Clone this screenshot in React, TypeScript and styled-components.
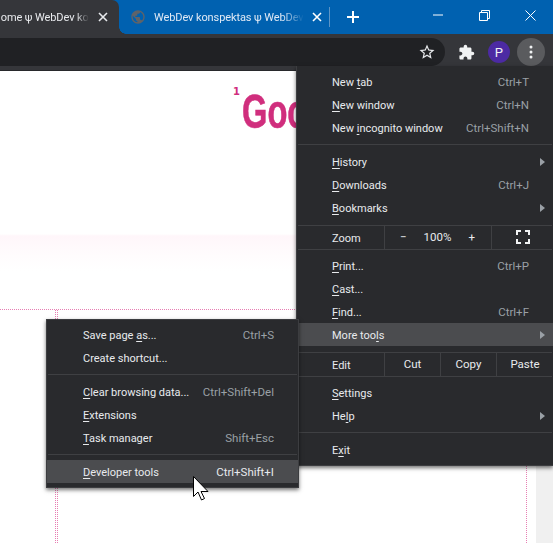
import React from 'react';
import styled, {createGlobalStyle} from 'styled-components';
import {MdExtension, MdPublic, MdStarBorder} from 'react-icons/md';

const GlobalStyle = createGlobalStyle`
  html, body {
    margin: 0;
    padding: 0;
    background: #fff;
    overflow: hidden;
  }
  * { box-sizing: border-box; }
`

const Window = styled.div`
  position: relative;
  width: 553px;
  height: 543px;
  overflow: hidden;
  display: flex;
  flex-direction: column;
  font-family: Roboto, "Open Sans", sans-serif;
  font-size: 11px;
  color: #e8eaed;
`

const TabStrip = styled.div`
  height: 34px;
  flex: none;
  display: flex;
  align-items: stretch;
  background: #0061b0;
`

const ActiveTab = styled.div`
  position: relative;
  width: 119px;
  flex: none;
  display: flex;
  align-items: center;
  justify-content: flex-end;
  padding-right: 11px;
  gap: 9px;
  background: #35363a;
  border-top-right-radius: 7px;
  &::after {
    content: '';
    position: absolute;
    right: -7px;
    bottom: 0;
    width: 7px;
    height: 7px;
    background: radial-gradient(circle at 100% 0, transparent 6.5px, #35363a 7px);
  }
`

const TabLabel = styled.div<{$width: number}>`
  width: ${p => p.$width}px;
  overflow: hidden;
  white-space: nowrap;
  letter-spacing: -0.1px;
  color: #dfe9f5;
  -webkit-mask-image: linear-gradient(to right, #000 85%, transparent);
  mask-image: linear-gradient(to right, #000 85%, transparent);
`

const ActiveLabel = styled(TabLabel)`
  text-indent: -8px;
  color: #e8eaed;
`

const IdleTab = styled.div`
  width: 210px;
  flex: none;
  display: flex;
  align-items: center;
  padding-left: 11px;
  gap: 8px;
`

const TabDivider = styled.div`
  width: 1px;
  height: 20px;
  align-self: center;
  background: #5d95c6;
`

const NewTab = styled.div`
  width: 46px;
  display: flex;
  align-items: center;
  justify-content: center;
`

const WindowControls = styled.div`
  margin-left: auto;
  display: flex;
`

const ControlButton = styled.div`
  width: 46px;
  height: 30px;
  display: flex;
  align-items: center;
  justify-content: center;
`

const Toolbar = styled.div`
  height: 37px;
  flex: none;
  display: flex;
  align-items: flex-start;
  background: #35363a;
  padding-top: 4px;
  border-bottom: 1px solid #28292c;
`

const Omnibox = styled.div`
  width: 445px;
  height: 28px;
  flex: none;
  display: flex;
  align-items: center;
  justify-content: flex-end;
  padding-right: 9px;
  background: #202124;
  border-radius: 0 14px 14px 0;
`

const ToolIcons = styled.div`
  display: flex;
  align-items: center;
  height: 28px;
  margin-left: 5px;
`

const ToolSlot = styled.div`
  width: 32.5px;
  height: 28px;
  display: flex;
  align-items: center;
  justify-content: center;
`

const Avatar = styled.div`
  width: 22px;
  height: 22px;
  border-radius: 50%;
  background: #4c2aa3;
  color: #f1f3f4;
  font-size: 13px;
  display: flex;
  align-items: center;
  justify-content: center;
`

const MenuButton = styled.div`
  width: 28px;
  height: 28px;
  flex: none;
  border-radius: 50%;
  background: #5a5b5e;
  display: flex;
  align-items: center;
  justify-content: center;
`

const Page = styled.div`
  flex: 1;
  position: relative;
  display: flex;
  flex-direction: column;
  background: #fff;
`

const Hero = styled.div`
  height: 238px;
  flex: none;
  display: flex;
  align-items: flex-start;
  padding: 15px 0 0 233px;
  background: linear-gradient(
    to bottom,
    #fff 0,
    #fff 163px,
    #fff6fa 165px,
    #fffcfd 185px,
    #fff 200px
  );
`

const Sup = styled.span`
  font-family: "DejaVu Sans", sans-serif;
  font-weight: 700;
  font-size: 10px;
  line-height: 12px;
  color: #d02e7d;
`

const Title = styled.h1`
  margin: -2px 0 0 2px;
  font-family: "Liberation Sans", sans-serif;
  font-size: 48px;
  line-height: 56px;
  font-weight: 700;
  color: #d02e7d;
  -webkit-text-stroke: 0.6px #d02e7d;
  transform: scaleX(0.68);
  transform-origin: left top;
`

const dotH = 'linear-gradient(to right, #e77fb3 50%, transparent 50%)'
const dotV = 'linear-gradient(to bottom, #e77fb3 50%, transparent 50%)'

const Guides = styled.div`
  flex: 1;
  display: flex;
  padding-top: 1px;
  background: ${dotH} left top / 2px 1px repeat-x;
`

const GuideColumn = styled.div`
  width: 472px;
  margin-left: 55px;
  background:
    ${dotV} 0 0 / 1px 2px repeat-y,
    ${dotV} 2px 0 / 1px 2px repeat-y,
    ${dotV} 100% 0 / 1px 2px repeat-y;
`

const Gutter = styled.div`
  width: 17px;
  margin-left: auto;
  background: #f0f0f0;
`

const Row = styled.div<{$active?: boolean}>`
  height: 23px;
  display: flex;
  align-items: center;
  padding: 1px 0 0 35px;
  white-space: nowrap;
  background: ${p => (p.$active ? '#4b4c4f' : 'transparent')};
`

const Menu = styled.div<{$top: number; $left: number; $width: number}>`
  position: absolute;
  top: ${p => p.$top}px;
  left: ${p => p.$left}px;
  width: ${p => p.$width}px;
  padding: 4px 0;
  background: #292a2d;
  border: 1px solid #3c3d40;
  box-shadow: 0 2px 4px rgba(0, 0, 0, 0.55);
`

const MainMenu = styled(Menu)`
  border-right: none;
  border-top: none;
`

const SubMenu = styled(Menu)`
  padding-top: 3px;
  ${Row} {
    padding-left: 36px;
  }
`

const Label = styled.span`
  flex: 1;
`

const Shortcut = styled.span<{$active?: boolean}>`
  font-size: 11.5px;
  color: ${p => (p.$active ? '#e8eaed' : '#9aa0a6')};
`

const ArrowSlot = styled.span`
  width: 24px;
  flex: none;
  display: flex;
  justify-content: flex-end;
  padding-right: 8px;
`

const Arrow = styled.span`
  width: 0;
  height: 0;
  border-top: 4px solid transparent;
  border-bottom: 4px solid transparent;
  border-left: 5px solid #9aa0a6;
`

const Key = styled.span`
  text-decoration: underline;
  text-underline-offset: 2px;
`

const Separator = styled.div<{$above: number; $below: number}>`
  height: 1px;
  margin: ${p => p.$above}px 1px ${p => p.$below}px;
  background: #3f4043;
`

const ActionRow = styled.div`
  height: 23px;
  display: flex;
  align-items: stretch;
  padding-left: 35px;
`

const ActionLabel = styled.span`
  flex: 1;
  display: flex;
  align-items: center;
  padding-top: 1px;
`

const ActionCell = styled.span<{$width: number}>`
  width: ${p => p.$width}px;
  flex: none;
  display: flex;
  align-items: center;
  justify-content: center;
  padding-bottom: 1px;
  font-size: 11.5px;
  border-left: 1px solid #3f4043;
`

const ZoomCell = styled(ActionCell)`
  justify-content: space-between;
  padding: 0 16px 1px 15px;
`

const Cursor = styled.svg`
  position: absolute;
  left: 193px;
  top: 476px;
`

type Item = {
  label: React.ReactNode;
  shortcut?: string;
  arrow?: boolean;
  active?: boolean;
};

function MenuRow({label, shortcut, arrow, active}: Item) {
  return (
    <Row $active={active}>
      <Label>{label}</Label>
      {shortcut && <Shortcut $active={active}>{shortcut}</Shortcut>}
      <ArrowSlot>{arrow && <Arrow />}</ArrowSlot>
    </Row>
  );
}

function App() {
  return (
    <Window>
      <GlobalStyle />
      <TabStrip>
        <ActiveTab>
          <ActiveLabel $width={88}>Home ψ WebDev konspektas</ActiveLabel>
          <svg width="10" height="10" viewBox="0 0 10 10">
            <path d="M1 1l8 8M9 1l-8 8" stroke="#e8eaed" strokeWidth="1.6" />
          </svg>
        </ActiveTab>
        <IdleTab>
          <MdPublic size={16} color="#5f6368" />
          <TabLabel $width={150}>WebDev konspektas ψ WebDev</TabLabel>
          <svg width="10" height="10" viewBox="0 0 10 10">
            <path d="M1 1l8 8M9 1l-8 8" stroke="#fff" strokeWidth="1.6" />
          </svg>
        </IdleTab>
        <TabDivider />
        <NewTab>
          <svg width="12" height="12" viewBox="0 0 12 12">
            <path d="M6 0v12M0 6h12" stroke="#fff" strokeWidth="2" />
          </svg>
        </NewTab>
        <WindowControls>
          <ControlButton>
            <svg width="10" height="10" viewBox="0 0 10 10">
              <path d="M0 5h10" stroke="#fff" strokeWidth="1" />
            </svg>
          </ControlButton>
          <ControlButton>
            <svg width="11" height="11" viewBox="0 0 11 11" fill="none">
              <path d="M.5 2.5h8v8h-8zM2.5 2.5v-2h8v8h-2" stroke="#fff" strokeWidth="1" />
            </svg>
          </ControlButton>
          <ControlButton>
            <svg width="11" height="11" viewBox="0 0 11 11">
              <path d="M.5.5l10 10M10.5.5l-10 10" stroke="#fff" strokeWidth="1" />
            </svg>
          </ControlButton>
        </WindowControls>
      </TabStrip>
      <Toolbar>
        <Omnibox>
          <MdStarBorder size={18} color="#e8eaed" />
        </Omnibox>
        <ToolIcons>
          <ToolSlot>
            <MdExtension size={17} color="#f1f3f4" />
          </ToolSlot>
          <ToolSlot>
            <Avatar>P</Avatar>
          </ToolSlot>
          <ToolSlot>
            <MenuButton>
              <svg width="4" height="14" viewBox="0 0 4 14" fill="#f1f3f4">
                <circle cx="2" cy="2" r="1.5" />
                <circle cx="2" cy="7" r="1.5" />
                <circle cx="2" cy="12" r="1.5" />
              </svg>
            </MenuButton>
          </ToolSlot>
        </ToolIcons>
      </Toolbar>
      <Page>
        <Hero>
          <Sup>1</Sup>
          <Title>Good</Title>
        </Hero>
        <Guides>
          <GuideColumn />
          <Gutter />
        </Guides>
      </Page>

      <MainMenu $top={66} $left={296} $width={257}>
        <MenuRow label={<>New <Key>t</Key>ab</>} shortcut="Ctrl+T" />
        <MenuRow label={<><Key>N</Key>ew window</>} shortcut="Ctrl+N" />
        <MenuRow label={<>New <Key>i</Key>ncognito window</>} shortcut="Ctrl+Shift+N" />
        <Separator $above={5} $below={5} />
        <MenuRow label={<><Key>H</Key>istory</>} arrow />
        <MenuRow label={<><Key>D</Key>ownloads</>} shortcut="Ctrl+J" />
        <MenuRow label={<><Key>B</Key>ookmarks</>} arrow />
        <Separator $above={6} $below={0} />
        <ActionRow>
          <ActionLabel>Zoom</ActionLabel>
          <ZoomCell $width={107}>
            <span>−</span>
            <span>100%</span>
            <span>+</span>
          </ZoomCell>
          <ActionCell $width={62}>
            <svg width="14" height="14" viewBox="0 0 14 14" fill="none">
              <path d="M1 5V1h4M9 1h4v4M13 9v4H9M5 13H1V9" stroke="#f1f3f4" strokeWidth="2" />
            </svg>
          </ActionCell>
        </ActionRow>
        <Separator $above={0} $below={4} />
        <MenuRow label={<><Key>P</Key>rint...</>} shortcut="Ctrl+P" />
        <MenuRow label={<><Key>C</Key>ast...</>} />
        <MenuRow label={<><Key>F</Key>ind...</>} shortcut="Ctrl+F" />
        <MenuRow label={<>More too<Key>l</Key>s</>} arrow active />
        <Separator $above={6} $below={0} />
        <ActionRow>
          <ActionLabel>Edit</ActionLabel>
          <ActionCell $width={56}>Cut</ActionCell>
          <ActionCell $width={56}>Copy</ActionCell>
          <ActionCell $width={57}>Paste</ActionCell>
        </ActionRow>
        <Separator $above={0} $below={4} />
        <MenuRow label={<><Key>S</Key>ettings</>} />
        <MenuRow label={<>He<Key>l</Key>p</>} arrow />
        <Separator $above={5} $below={5} />
        <MenuRow label={<>E<Key>x</Key>it</>} />
      </MainMenu>

      <SubMenu $top={319} $left={46} $width={253}>
        <MenuRow label={<>Save page <Key>a</Key>s...</>} shortcut="Ctrl+S" />
        <MenuRow label="Create shortcut..." />
        <Separator $above={5} $below={5} />
        <MenuRow label={<><Key>C</Key>lear browsing data...</>} shortcut="Ctrl+Shift+Del" />
        <MenuRow label={<><Key>E</Key>xtensions</>} />
        <MenuRow label={<><Key>T</Key>ask manager</>} shortcut="Shift+Esc" />
        <Separator $above={5} $below={5} />
        <MenuRow label={<><Key>D</Key>eveloper tools</>} shortcut="Ctrl+Shift+I" active />
      </SubMenu>

      <Cursor width="16" height="25" viewBox="0 0 16 25">
        <path
          d="M.5.5V20.5L5 16l3.5 8 3-1.5-3.5-7h7z"
          fill="#fff"
          stroke="#000"
          strokeWidth="1"
        />
      </Cursor>
    </Window>
  );
}

export default App;
